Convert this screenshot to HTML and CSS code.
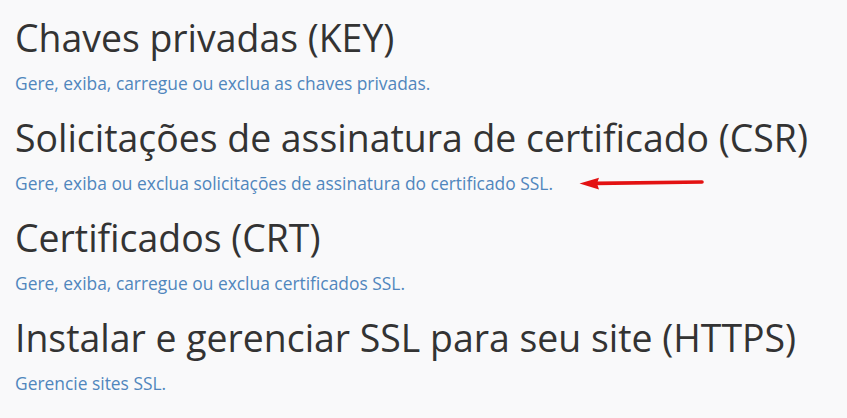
FILE: index.html
```html
<!DOCTYPE html>
<html>
<head>
<meta charset="utf-8">
<link rel="stylesheet" href="styles.css">
</head>
<body>
<div class="page">
  <section class="item">
    <h2 class="title">Chaves privadas (KEY)</h2>
    <a class="desc" href="#">Gere, exiba, carregue ou exclua as chaves privadas.</a>
  </section>
  <section class="item">
    <h2 class="title">Solicitações de assinatura de certificado (CSR)</h2>
    <div class="row">
      <a class="desc" href="#">Gere, exiba ou exclua solicitações de assinatura do certificado SSL.</a>
      <svg class="arrow" width="128" height="14" viewBox="0 0 128 14">
        <path d="M18 7.4 L124 6" stroke="#e31212" stroke-width="3.6" stroke-linecap="round" fill="none"/>
        <path d="M1.5 7.6 L21 1.8 L19 7.5 L21 13.4 Z" fill="#e31212"/>
      </svg>
    </div>
  </section>
  <section class="item">
    <h2 class="title">Certificados (CRT)</h2>
    <a class="desc" href="#">Gere, exiba, carregue ou exclua certificados SSL.</a>
  </section>
  <section class="item">
    <h2 class="title">Instalar e gerenciar SSL para seu site (HTTPS)</h2>
    <a class="desc" href="#">Gerencie sites SSL.</a>
  </section>
</div>
</body>
</html>
```
FILE: styles.css
```css
html, body {
  margin: 0;
  padding: 0;
  background: #f9f9fa;
}
body {
  font-family: "Open Sans", sans-serif;
  width: 847px;
  height: 418px;
  overflow: hidden;
}
.page {
  padding: 16px 0 0 15px;
  display: flex;
  flex-direction: column;
}
.item {
  height: 100px;
  display: flex;
  flex-direction: column;
  align-items: flex-start;
}
.title {
  margin: 0 0 11px;
  font-size: 37.4px;
  font-weight: 400;
  line-height: 44px;
  color: #333333;
  white-space: nowrap;
}
.desc {
  display: block;
  font-size: 17.4px;
  line-height: 24px;
  color: #5086bd;
  text-decoration: none;
  white-space: nowrap;
}
.row {
  display: flex;
  align-items: center;
}
.arrow {
  margin-left: 25px;
  margin-top: -1px;
}
```
